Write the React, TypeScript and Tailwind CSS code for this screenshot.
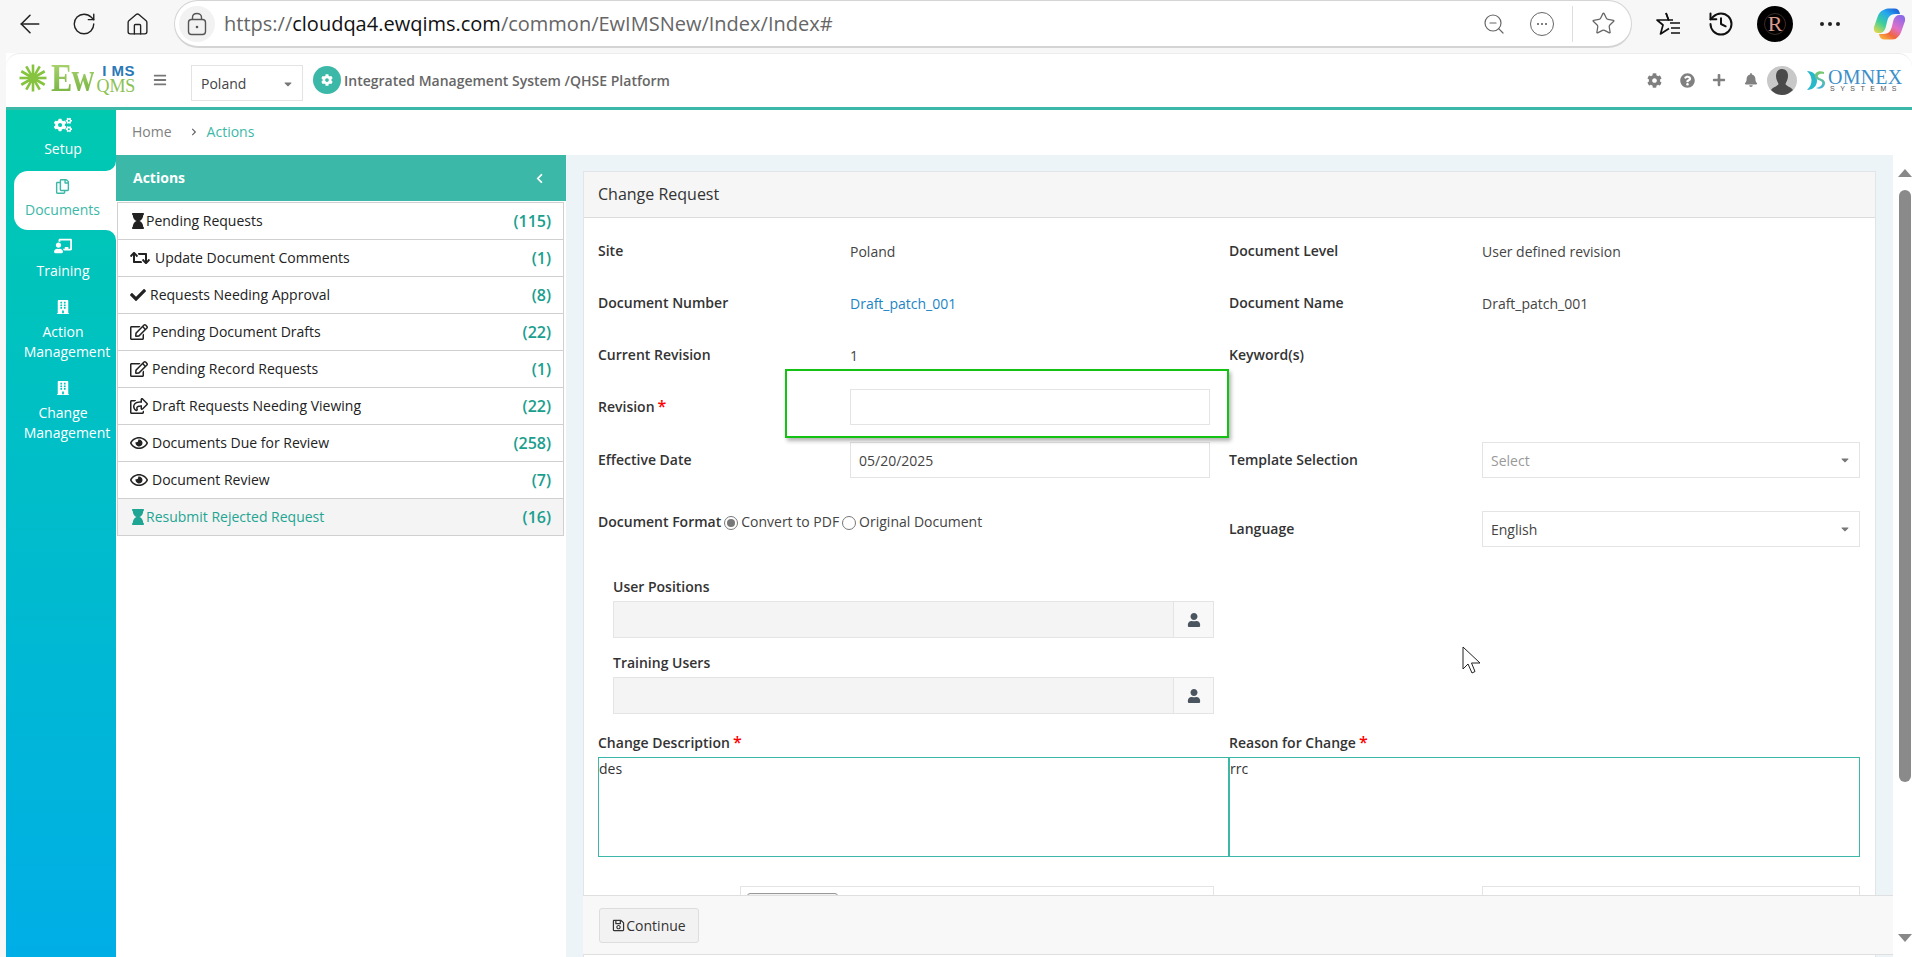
import { ArrowLeft, RotateCw, Home, ZoomOut, Star, History } from "lucide-react";
import {
  FaCogs,
  FaRegCopy,
  FaChalkboardTeacher,
  FaBuilding,
  FaHourglass,
  FaRetweet,
  FaCheck,
  FaRegEdit,
  FaRegShareSquare,
  FaRegEye,
  FaCog,
  FaQuestionCircle,
  FaPlus,
  FaBell,
  FaBars,
  FaUser,
  FaRegSave,
  FaChevronLeft,
  FaChevronRight,
  FaCaretDown,
} from "react-icons/fa";
import type { ReactNode } from "react";

const rows = [
  { icon: <FaHourglass size={16} />, label: "Pending Requests", count: "(115)", gap: "ml-[-4px]" },
  { icon: <FaRetweet size={20} />, label: "Update Document Comments", count: "(1)", gap: "ml-[5px]" },
  { icon: <FaCheck size={16} />, label: "Requests Needing Approval", count: "(8)", gap: "ml-[0px]" },
  { icon: <FaRegEdit size={18} />, label: "Pending Document Drafts", count: "(22)", gap: "ml-[2px]" },
  { icon: <FaRegEdit size={18} />, label: "Pending Record Requests", count: "(1)", gap: "ml-[2px]" },
  { icon: <FaRegShareSquare size={18} />, label: "Draft Requests Needing Viewing", count: "(22)", gap: "ml-[2px]" },
  { icon: <FaRegEye size={18} />, label: "Documents Due for Review", count: "(258)", gap: "ml-[2px]" },
  { icon: <FaRegEye size={18} />, label: "Document Review", count: "(7)", gap: "ml-[2px]" },
];

function Logo() {
  const spokes = [0, 30, 60, 90, 120, 150];
  return (
    <div className="flex items-start w-[117px] h-[34px] ml-[13px] mt-[-1px] shrink-0">
      <svg width="28" height="28" viewBox="0 0 28 28" className="mt-[1px] shrink-0">
        <circle cx="14" cy="14" r="5" fill="#86c440" />
        {spokes.map((a) => (
          <line key={a} x1="14" y1="0.5" x2="14" y2="27.5" stroke="#86c440" strokeWidth="2.6" transform={`rotate(${a} 14 14)`} />
        ))}
      </svg>
      <div className="ml-[4px] w-[44px] shrink-0">
        <span className="inline-block origin-top-left scale-x-[0.8] font-['Liberation_Serif',serif] font-bold text-[40px] leading-[30px] tracking-[-1px] bg-gradient-to-b from-[#a9d36e] to-[#78b544] bg-clip-text text-transparent">Ew</span>
      </div>
      <div className="w-[40px] shrink-0 flex flex-col items-end">
        <span className="font-['Liberation_Sans',sans-serif] font-bold text-[15px] leading-[15px] text-[#2a78b8] tracking-[0.5px] whitespace-nowrap">I MS</span>
        <span className="font-['Liberation_Serif',serif] text-[18px] leading-[17px] text-[#8cc152] tracking-[-0.2px] whitespace-nowrap">QMS</span>
      </div>
    </div>
  );
}

function Omnex() {
  return (
    <div className="flex items-start ml-[10px] w-[93px]">
      <svg width="18" height="21" viewBox="0 0 18 21" className="mt-[1px] shrink-0">
        <defs>
          <linearGradient id="omS" x1="0" y1="0" x2="0" y2="1">
            <stop offset="0" stopColor="#7cc96a" />
            <stop offset="1" stopColor="#3fb2dc" />
          </linearGradient>
        </defs>
        <path d="M0 1 C6 1 10 5 10 10.5 C10 16 6 20 0 20 C3 17 4.5 14 4.5 10.5 C4.5 7 3 4 0 1Z" fill="#27b8c9" />
        <path d="M17 2 C11 0 7 3 8 7 C9 10 13 10 15 12 C16 14 14 17 9 18 C14 20 18 17 18 13 C18 9 13 9 11 7 C10 5 13 3 17 4Z" fill="url(#omS)" />
      </svg>
      <div className="ml-[3px] flex flex-col font-['Liberation_Serif',serif]">
        <span className="text-[20px] leading-[16px] text-[#3d8fc8] tracking-[0.2px]">OMNEX</span>
        <span className="text-[7px] leading-[7px] text-[#555] tracking-[5.5px] ml-[2px] font-['Liberation_Sans',sans-serif]">SYSTEMS</span>
      </div>
    </div>
  );
}

function Avatar() {
  return (
    <svg width="30" height="29" viewBox="0 0 30 29" className="shrink-0">
      <ellipse cx="15" cy="14.5" rx="15" ry="14.5" fill="#c8c8c8" />
      <path d="M15 3 C19 3 21 6 21 10 C21 14 19 16 18.5 18 C19 20 24 21 26 24 C23 27 19 29 15 29 C11 29 7 27 4 24 C6 21 11 20 11.5 18 C11 16 9 14 9 10 C9 6 11 3 15 3Z" fill="#4a4a4a" />
    </svg>
  );
}

function Copilot() {
  return (
    <svg width="33" height="32" viewBox="0 0 32 32" className="shrink-0">
      <defs>
        <linearGradient id="cpA" x1="0.85" y1="0" x2="0.1" y2="1">
          <stop offset="0" stopColor="#1d5fd8" />
          <stop offset="0.3" stopColor="#25a8ee" />
          <stop offset="0.65" stopColor="#3fcf9a" />
          <stop offset="1" stopColor="#e6d84a" />
        </linearGradient>
        <linearGradient id="cpB" x1="0.9" y1="0.1" x2="0.25" y2="1">
          <stop offset="0" stopColor="#8e6ae8" />
          <stop offset="0.45" stopColor="#e070c8" />
          <stop offset="0.75" stopColor="#f0653f" />
          <stop offset="1" stopColor="#f7a63c" />
        </linearGradient>
      </defs>
      <path d="M10 2 C12 0.5 14 0.5 16 0.5 H21 C24 0.5 25 2 26 4 L26.5 6 H22 C17 6 15 9 14 12 L12 20 C11 23 9 25 6 25 H4 C1 25 0 22 0.5 19 L4 9 C5 6 7 3 10 2Z" fill="url(#cpA)" />
      <path d="M22 31 C20 31.5 18 31.5 16 31.5 H11 C8 31.5 7 30 6 28 L5.5 26 H10 C15 26 17 23 18 20 L20 12 C21 9 23 7 26 7 H28 C31 7 32 10 31.5 13 L28 23 C27 26 25 29 22 31Z" fill="url(#cpB)" />
    </svg>
  );
}

function BrowserBar() {
  return (
    <div className="h-[53px] shrink-0 flex items-start bg-[#f7f7f7]">
      <div className="flex items-center h-[48px] pl-[15px]">
        <ArrowLeft size={30} strokeWidth={1.25} className="text-[#222]" />
        <RotateCw size={26} strokeWidth={1.3} className="text-[#222] ml-[26px]" />
        <Home size={25} strokeWidth={1.3} className="text-[#222] ml-[28px]" />
      </div>
      <div className="ml-[24px] w-[1458px] h-[48px] bg-white rounded-full border border-[#d4d4d4] border-b-2 flex items-center pl-[4px]">
        <div className="w-[36px] h-[36px] rounded-full bg-[#f2f2f2] flex items-center justify-center">
          <svg width="20" height="24" viewBox="0 0 20 24" fill="none" stroke="#555" strokeWidth="1.4">
            <rect x="1.5" y="7.5" width="17" height="15" rx="3" />
            <path d="M5.5 7.5 V5.5 C5.5 3 7.5 1.5 10 1.5 C12.5 1.5 14.5 3 14.5 5.5 V7.5" />
            <circle cx="10" cy="15" r="1.3" fill="#555" stroke="none" />
          </svg>
        </div>
        <div className="ml-[9px] text-[20px] text-[#666] whitespace-nowrap w-[640px]">
          https://<span className="text-[#111]">cloudqa4.ewqims.com</span>/common/EwIMSNew/Index/Index#
        </div>
        <div className="ml-auto flex items-center text-[#666]">
          <ZoomOut size={24} strokeWidth={1.2} />
          <div className="ml-[24px] w-[24px] h-[24px] rounded-full border border-[#666] flex items-center justify-center gap-[2px]">
            <span className="w-[2px] h-[2px] bg-[#555] rounded-full" />
            <span className="w-[2px] h-[2px] bg-[#555] rounded-full" />
            <span className="w-[2px] h-[2px] bg-[#555] rounded-full" />
          </div>
          <div className="ml-[18px] w-px h-[36px] bg-[#ddd]" />
          <Star size={25} strokeWidth={1.2} className="ml-[18px] mr-[15px]" />
        </div>
      </div>
      <div className="flex items-center h-[48px] text-[#111]">
        <svg width="28" height="28" viewBox="0 0 28 28" fill="none" stroke="#111" strokeWidth="1.7" className="ml-[22px]">
          <path d="M12 3 L14.6 10 H3 L9 15 L6.5 24 L15 18.5" strokeLinejoin="round" />
          <path d="M12 3 L14.6 10 H19" />
          <path d="M16 13 H26 M17 18 H26 M17 23 H26" />
        </svg>
        <History size={28} strokeWidth={1.7} className="ml-[25px]" />
        <div className="ml-[22px] w-[36px] h-[36px] rounded-full bg-black flex items-center justify-center">
          <div className="w-[22px] h-[22px] rounded-full border border-[#3d2b28] flex items-center justify-center font-['Liberation_Serif',serif] text-[22px] leading-none text-[#d99c8c]">R</div>
        </div>
        <div className="ml-[27px] flex gap-[4px]">
          <span className="w-[4px] h-[4px] rounded-full bg-[#222]" />
          <span className="w-[4px] h-[4px] rounded-full bg-[#222]" />
          <span className="w-[4px] h-[4px] rounded-full bg-[#222]" />
        </div>
        <div className="ml-[33px]">
          <Copilot />
        </div>
      </div>
    </div>
  );
}

function Header() {
  return (
    <div className="h-[57px] shrink-0 bg-white rounded-t-[14px] border-t border-[#ececec] border-b-[3px] border-b-[#3cb8a8] flex items-center pb-[1px] pr-[12px]">
      <Logo />
      <FaBars size={14} className="text-[#777] ml-[17px] shrink-0" />
      <div className="ml-[24px] w-[112px] h-[36px] mt-[5px] border border-[#e3e3e3] flex items-center pl-[9px] pr-[8px] pt-[2px] text-[14px] text-[#444]">
        Poland
        <FaCaretDown size={12} className="ml-auto text-[#777]" />
      </div>
      <div className="ml-[10px] w-[28px] h-[28px] rounded-full bg-[#3cb8a8] flex items-center justify-center">
        <FaCog size={12} className="text-white" />
      </div>
      <div className="ml-[3px] text-[14px] font-semibold text-[#666] whitespace-nowrap">Integrated Management System /QHSE Platform</div>
      <div className="ml-auto flex items-center text-[#808080]">
        <FaCog size={15} />
        <FaQuestionCircle size={15} className="ml-[18px]" />
        <FaPlus size={14} className="ml-[17px]" />
        <FaBell size={14} className="ml-[18px]" />
        <div className="ml-[9px]">
          <Avatar />
        </div>
        <Omnex />
      </div>
    </div>
  );
}

function SideItem({ icon, label, h }: { icon: ReactNode; label: ReactNode; h: string }) {
  return (
    <div className={`${h} flex flex-col items-center text-white text-[14px] leading-[20px] pl-[4px]`}>
      <div className="h-[18px] flex items-center justify-center mb-[6px]">{icon}</div>
      {label}
    </div>
  );
}

function Sidebar() {
  return (
    <div className="w-[110px] shrink-0 bg-white flex flex-col">
      <div className="h-[61px] shrink-0 pt-[6px] bg-gradient-to-b from-[#00c9b0] to-[#00c7b4] rounded-br-[10px]">
        <div className="flex flex-col items-center text-white text-[14px] leading-[20px] pl-[4px]">
          <FaCogs size={18} className="mb-[5px]" />
          Setup
        </div>
      </div>
      <div className="h-[59px] shrink-0 pl-[8px] bg-gradient-to-b from-[#00c7b4] to-[#00c5b8]">
        <div className="h-full bg-white rounded-l-[14px] pt-[6px] text-[#3cb8a8] text-[14px] leading-[20px] flex flex-col items-center pr-[5px]">
          <FaRegCopy size={15} className="mb-[6px] mt-[2px]" />
          Documents
        </div>
      </div>
      <div className="flex-1 pt-[7px] bg-gradient-to-b from-[#00c5b8] to-[#00aee6] rounded-tr-[10px]">
        <SideItem h="h-[61px]" icon={<FaChalkboardTeacher size={18} />} label="Training" />
        <SideItem
          h="h-[81px]"
          icon={<FaBuilding size={14} />}
          label={
            <>
              <span>Action</span>
              <span className="pl-[8px]">Management</span>
            </>
          }
        />
        <SideItem
          h="h-[81px]"
          icon={<FaBuilding size={14} />}
          label={
            <>
              <span>Change</span>
              <span className="pl-[8px]">Management</span>
            </>
          }
        />
      </div>
    </div>
  );
}

function ActionsPanel() {
  return (
    <div className="w-[450px] shrink-0 bg-white flex flex-col">
      <div className="h-[46px] bg-[#3cb8a8] flex items-center pl-[17px] pr-[21px] pb-[2px] text-white text-[14px] font-bold">
        Actions
        <FaChevronLeft size={11} className="ml-auto mt-[2px]" />
      </div>
      <div className="mt-[1px] mx-[1px] border-l border-r border-[#d0d0d0] mr-[2px]">
        {rows.map((r) => (
          <div key={r.label} className="h-[37px] border-t border-[#d0d0d0] flex items-center pl-[12px] pr-[12px] text-[14px] text-[#222]">
            <span className="w-[20px] flex items-center text-[#222] shrink-0">{r.icon}</span>
            <span className={`${r.gap} pb-[2px]`}>{r.label}</span>
            <span className="ml-auto text-[16px] font-semibold text-[#1a9e8e]">{r.count}</span>
          </div>
        ))}
        <div className="h-[38px] border-t border-b border-[#d0d0d0] bg-[#f4f4f4] flex items-center pl-[12px] pr-[12px] text-[14px] text-[#1fa593]">
          <FaHourglass size={16} className="shrink-0" />
          <span className="ml-0 pb-[2px]">Resubmit Rejected Request</span>
          <span className="ml-auto text-[16px] font-semibold text-[#1a9e8e]">(16)</span>
        </div>
      </div>
    </div>
  );
}

function Req() {
  return <span className="text-[#f00] text-[16px] leading-none ml-[3px]">*</span>;
}

function Label({ children, w }: { children: ReactNode; w: string }) {
  return <div className={`${w} shrink-0 text-[14px] font-semibold text-[#333] -translate-y-px`}>{children}</div>;
}

function Row({ h, children, extra = "" }: { h: string; children: ReactNode; extra?: string }) {
  return <div className={`${h} flex ${extra}`}>{children}</div>;
}

function Cell({ children, center = true }: { children?: ReactNode; center?: boolean }) {
  return <div className={`w-[631px] flex shrink-0 ${center ? "items-center" : ""}`}>{children}</div>;
}

function Box({ children, w }: { children?: ReactNode; w: string }) {
  return <div className={`${w} h-[36px] shrink-0 border border-[#e4e4e4] bg-white flex items-center px-[8px] text-[14px] text-[#444]`}>{children}</div>;
}

function Radio({ on }: { on: boolean }) {
  return (
    <span className="w-[14px] h-[14px] rounded-full border border-[#777] inline-flex items-center justify-center mx-[3px] translate-y-[1px]">
      {on && <span className="w-[8px] h-[8px] rounded-full bg-[#777]" />}
    </span>
  );
}

function UserField({ label }: { label: string }) {
  return (
    <div className="ml-[15px] w-[601px]">
      <div className="h-[20px] text-[14px] font-semibold text-[#333] mb-[4px] -translate-y-px">{label}</div>
      <div className="h-[37px] flex border border-[#e4e4e4]">
        <div className="flex-1 bg-[#f4f4f4]" />
        <div className="w-[40px] border-l border-[#e4e4e4] bg-[#f8f8f8] flex items-center justify-center">
          <FaUser size={14} className="text-[#4a5560]" />
        </div>
      </div>
    </div>
  );
}

function Form() {
  const value = "text-[14px] text-[#444]";
  return (
    <div className="flex-1 min-w-0 relative bg-[#edf4f8] pl-[17px] pt-[16px]">
      <div className="w-[1293px] border border-[#e2e5e7] bg-white h-[900px]">
        <div className="h-[46px] bg-[#f6f6f6] border-b border-[#dcdcdc] flex items-center pl-[14px] pb-[2px] text-[16px] text-[#333]">Change Request</div>
        <div className="pl-[14px] pt-[7px]">
          <Row h="h-[52px]">
            <Cell>
              <Label w="w-[252px]">Site</Label>
              <span className={value}>Poland</span>
            </Cell>
            <Cell>
              <Label w="w-[253px]">Document Level</Label>
              <span className={value}>User defined revision</span>
            </Cell>
          </Row>
          <Row h="h-[52px]">
            <Cell>
              <Label w="w-[252px]">Document Number</Label>
              <span className="text-[14px] text-[#1c85c4]">Draft_patch_001</span>
            </Cell>
            <Cell>
              <Label w="w-[253px]">Document Name</Label>
              <span className={value}>Draft_patch_001</span>
            </Cell>
          </Row>
          <Row h="h-[52px]">
            <Cell>
              <Label w="w-[252px]">Current Revision</Label>
              <span className={value}>1</span>
            </Cell>
            <Cell>
              <Label w="w-[253px]">Keyword(s)</Label>
            </Cell>
          </Row>
          <Row h="h-[52px]">
            <Cell>
              <Label w="w-[252px]">
                Revision
                <Req />
              </Label>
              <div className="relative">
                <Box w="w-[360px]" />
                <div className="absolute left-[-65px] right-[-19px] top-[-20px] bottom-[-13px] border-2 border-[#14c214] shadow-[2px_3px_4px_rgba(0,0,0,0.3)]" />
              </div>
            </Cell>
            <Cell />
          </Row>
          <Row h="h-[54px]">
            <Cell>
              <Label w="w-[252px]">Effective Date</Label>
              <Box w="w-[360px]">05/20/2025</Box>
            </Cell>
            <Cell>
              <Label w="w-[253px]">Template Selection</Label>
              <Box w="w-[378px]">
                <span className="text-[#999]">Select</span>
                <FaCaretDown size={12} className="ml-auto text-[#777]" />
              </Box>
            </Cell>
          </Row>
          <Row h="h-[36px]" extra="mt-[24px]">
            <Cell center={false}>
              <div className="text-[14px] font-semibold text-[#333] whitespace-nowrap flex items-start h-[22px]">
                Document Format
                <span className="font-normal text-[#444] flex items-center">
                  <Radio on />
                  Convert to PDF
                  <Radio on={false} />
                  Original Document
                </span>
              </div>
            </Cell>
            <Cell>
              <Label w="w-[253px]">Language</Label>
              <Box w="w-[378px]">
                English
                <FaCaretDown size={12} className="ml-auto text-[#777]" />
              </Box>
            </Cell>
          </Row>
          <div className="mt-[30px]">
            <UserField label="User Positions" />
          </div>
          <div className="mt-[15px]">
            <UserField label="Training Users" />
          </div>
          <div className="flex mt-[19px]">
            <div className="w-[631px] shrink-0">
              <div className="h-[20px] text-[14px] font-semibold text-[#333] mb-[4px] -translate-y-px">
                Change Description
                <Req />
              </div>
              <div className="h-[100px] border border-[#3cb8a8] text-[14px] text-[#333] leading-[20px] pt-[1px]">des</div>
            </div>
            <div className="w-[631px] shrink-0">
              <div className="h-[20px] text-[14px] font-semibold text-[#333] mb-[4px] -translate-y-px">
                Reason for Change
                <Req />
              </div>
              <div className="h-[100px] border border-[#3cb8a8] text-[14px] text-[#333] leading-[20px] pt-[1px]">rrc</div>
            </div>
          </div>
          <div className="flex mt-[29px]">
            <div className="w-[142px] shrink-0" />
            <div className="w-[474px] h-[36px] border border-[#e4e4e4] pl-[6px] pt-[6px]">
              <div className="w-[91px] h-[20px] border border-[#999] rounded-[3px] bg-[#f2f2f2]" />
            </div>
            <div className="w-[268px] shrink-0" />
            <div className="w-[378px] h-[36px] border border-[#e4e4e4]" />
          </div>
        </div>
      </div>

      <div className="absolute left-[17px] right-0 bottom-[2px] h-[60px] bg-[#f8f8f8] border-t border-b border-[#dfdfdf] pl-[16px] pt-[12px]">
        <div className="w-[100px] h-[35px] border border-[#ddd] rounded-[3px] bg-[#f2f2f2] flex items-center justify-center text-[14px] text-[#333]">
          <FaRegSave size={13} className="mr-[1px]" />
          Continue
        </div>
      </div>
    </div>
  );
}

function Scrollbar() {
  return (
    <div className="w-[19px] shrink-0 bg-white flex flex-col items-center pl-[4px]">
      <div className="mt-[14px] w-0 h-0 border-l-[7px] border-r-[7px] border-b-[8px] border-l-transparent border-r-transparent border-b-[#888]" />
      <div className="mt-[13px] w-[12px] h-[592px] rounded-full bg-[#8a8a8a]" />
      <div className="mt-[152px] w-0 h-0 border-l-[7px] border-r-[7px] border-t-[8px] border-l-transparent border-r-transparent border-t-[#888]" />
    </div>
  );
}

export default function App() {
  return (
    <div className="w-[1912px] h-[957px] overflow-hidden bg-[#f7f7f7] flex flex-col relative font-['Open_Sans',sans-serif]">
      <BrowserBar />
      <div className="flex-1 min-h-0 ml-[6px] flex flex-col bg-white">
        <Header />
        <div className="flex-1 min-h-0 flex">
          <Sidebar />
          <div className="flex-1 min-w-0 flex flex-col">
            <div className="h-[45px] shrink-0 bg-white flex items-center pl-[16px] pb-[2px] text-[14px] text-[#808080]">
              Home
              <FaChevronRight size={8} className="ml-[18px] mr-[9px] text-[#666]" />
              <span className="text-[#3cb8a8]">Actions</span>
            </div>
            <div className="flex-1 min-h-0 flex">
              <ActionsPanel />
              <Form />
              <Scrollbar />
            </div>
          </div>
        </div>
      </div>
      {/* mouse pointer left in the capture */}
      <svg width="20" height="28" viewBox="0 0 20 28" className="absolute left-[1462px] top-[646px]">
        <path d="M1 1 V23 L6 18 L10 27 L13 25.5 L9.5 17 H18 Z" fill="white" stroke="#222" strokeWidth="1" strokeLinejoin="round" />
      </svg>
    </div>
  );
}
